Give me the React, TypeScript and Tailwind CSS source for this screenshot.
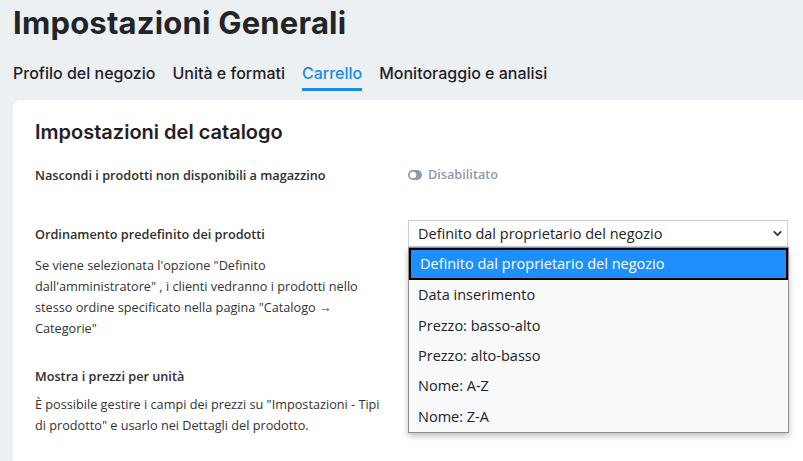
import { ChevronDown } from "lucide-react";

const tabs = ["Profilo del negozio", "Unità e formati", "Carrello", "Monitoraggio e analisi"];
const options = [
  "Definito dal proprietario del negozio",
  "Data inserimento",
  "Prezzo: basso-alto",
  "Prezzo: alto-basso",
  "Nome: A-Z",
  "Nome: Z-A",
];

const heading = { fontFamily: "Inter, 'Open Sans', sans-serif" };

export default function App() {
  return (
    <div
      className="h-[461px] w-[803px] overflow-hidden bg-[#edf0f3] text-[#2b2b2b]"
      style={{ fontFamily: "'Open Sans', 'Noto Sans', sans-serif" }}
    >
      <div className="px-[13px]" style={heading}>
        <h1 className="pt-[1px] text-[31px] font-bold leading-[44px] tracking-[0.2px] text-[#222428]">
          Impostazioni Generali
        </h1>
        <nav className="mt-[15px] flex gap-[17px] text-[16px] font-medium text-[#1f2126]">
          {tabs.map((tab) => (
            <div
              key={tab}
              className={`h-[31px] border-b-[3px] leading-[27px] ${
                tab === "Carrello" ? "border-[#1a8ae6] text-[#1a8ae6]" : "border-transparent"
              }`}
            >
              {tab}
            </div>
          ))}
        </nav>
      </div>

      <div className="ml-[13px] mt-[9px] h-[400px] rounded-tl-lg bg-white pl-[22px] pt-[18px]">
        <h2 className="text-[20px] font-semibold leading-[28px] text-[#1f2126]" style={heading}>
          Impostazioni del catalogo
        </h2>

        <div className="mt-[19px] grid grid-cols-[351px_380px] gap-x-[22px] text-[12.7px]">
          <div className="font-semibold leading-[20px] text-[#2e2e2e]">
            Nascondi i prodotti non disponibili a magazzino
          </div>
          <div className="flex items-center gap-[6px] text-[#8d9aab]">
            <svg width="14" height="10" viewBox="0 0 14 10">
              <rect x="0" y="0" width="14" height="10" rx="5" fill="#8d9aab" />
              <circle cx="5" cy="5" r="3.3" fill="#fff" />
            </svg>
            <span className="font-semibold">Disabilitato</span>
          </div>

          <div className="mt-[39px]">
            <div className="font-semibold leading-[20px] text-[#2e2e2e]">Ordinamento predefinito dei prodotti</div>
            <p className="mt-[11px] leading-[21px] text-[#333]">
              Se viene selezionata l'opzione "Definito dall'amministratore" , i clienti vedranno i prodotti nello
              stesso ordine specificato nella pagina "Catalogo → Categorie"
            </p>
          </div>
          <div className="relative mt-[35px] self-start">
            <div className="flex h-[27px] items-center justify-between border border-[#c9ced6] bg-white pl-[9px] pr-[3px] text-[14.5px] text-[#222]">
              <span>Definito dal proprietario del negozio</span>
              <ChevronDown size={13} strokeWidth={3.2} className="text-[#333]" />
            </div>
            <ul className="absolute left-0 top-[27px] z-10 w-[381px] border border-[#8e8e8e] bg-[#f8f9fb] text-[14.5px] text-[#222] shadow-[0_3px_6px_rgba(0,0,0,0.25)]">
              {options.map((opt, i) => (
                <li
                  key={opt}
                  className={`flex items-center pl-[9px] ${
                    i === 0 ? "h-[32px] border-2 border-black bg-[#1e8ffe] pl-[6px] text-white" : "h-[30.4px]"
                  }`}
                >
                  {opt}
                </li>
              ))}
            </ul>
          </div>

          <div className="mt-[27px]">
            <div className="font-semibold leading-[20px] text-[#2e2e2e]">Mostra i prezzi per unità</div>
            <p className="mt-[8px] leading-[21px] text-[#333]">
              È possibile gestire i campi dei prezzi su "Impostazioni - Tipi di prodotto" e usarlo nei Dettagli del
              prodotto.
            </p>
          </div>
          <div />
        </div>
      </div>
    </div>
  );
}
